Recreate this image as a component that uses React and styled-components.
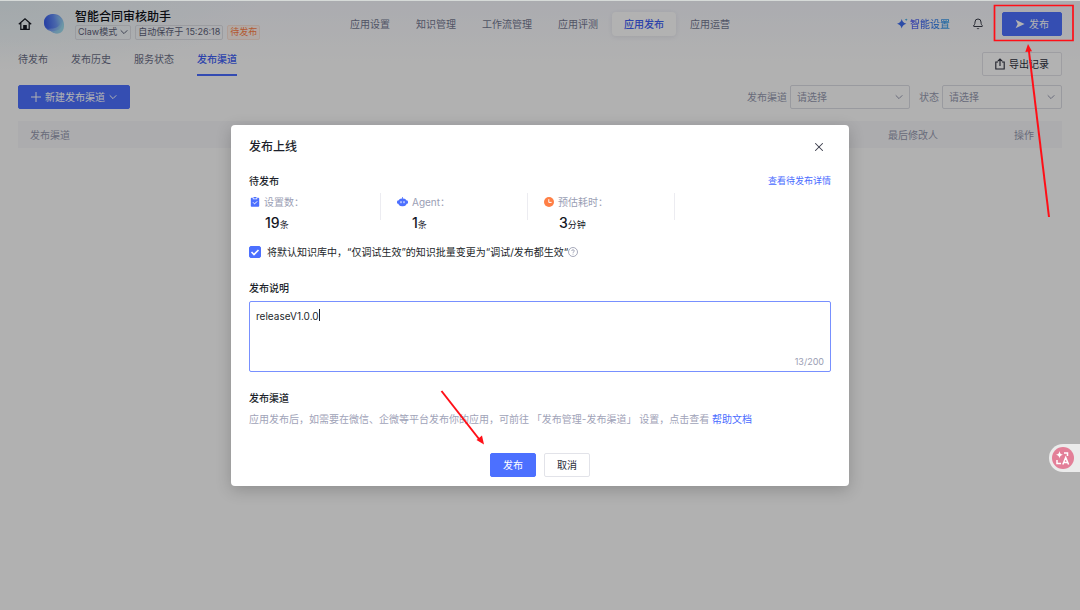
import React, { useState } from 'react';
import styled, { createGlobalStyle, css } from 'styled-components';
import { Bell, X } from 'lucide-react';

const GlobalStyle = createGlobalStyle`
	* {
		box-sizing: border-box;
	}
	body {
		margin: 0;
		color: #1c1f2b;
		background: #fff;
		font-family: Inter, 'Noto Sans CJK SC', sans-serif;
		font-size: 10px;
		line-height: 14px;
	}
	button,
	input,
	select,
	textarea {
		font: inherit;
		color: inherit;
	}
	a {
		color: #4a6cff;
		text-decoration: none;
	}
	svg {
		display: block;
		flex: none;
	}
`;

const Page = styled.div`
	position: relative;
	min-height: 100vh;
	overflow: hidden;
	border-top: 1px solid #d6dad8;
	background: radial-gradient(ellipse 260px 70px at 0 0, #e9f3f6, transparent),
		linear-gradient(180deg, #f5f6fd 0, #fefefe 60px);
`;

const Header = styled.header`
	display: grid;
	grid-template-columns: 1fr auto 1fr;
	align-items: center;
	height: 45px;
	padding: 0 18px;
`;

const Brand = styled.div`
	display: flex;
	align-items: center;
`;

const HomeLink = styled.a`
	color: #161922;
	margin-right: 11px;
`;

const BrandInfo = styled.div`
	margin-left: 10px;
`;

const AppName = styled.h1`
	margin: 0;
	font-size: 12px;
	line-height: 17px;
	font-weight: 500;
	color: #11131a;
`;

const Tags = styled.div`
	display: flex;
	gap: 4px;
`;

const tag = css`
	display: flex;
	align-items: center;
	height: 15px;
	padding: 0 2px;
	border: 1px solid #dfe0e6;
	border-radius: 2px;
	background: none;
	color: #5c6078;
	font-size: 9px;
	white-space: nowrap;
`;

const Tag = styled.span`
	${tag}
	${(p) =>
		p.$pending &&
		css`
			color: #ff7f47;
			border-color: #fbe3d7;
			background: #fff3ec;
		`}
`;

const ModeButton = styled.button`
	${tag}
	gap: 3px;
`;

const Nav = styled.nav`
	display: flex;
	gap: 2px;
`;

const NavLink = styled.a`
	padding: 5px 12px;
	border-radius: 4px;
	color: #747891;
	${(p) =>
		p.$active &&
		css`
			color: #4060f5;
			font-weight: 500;
			background: #fff;
			box-shadow: 0 1px 5px rgba(60, 60, 90, 0.1);
		`}
`;

const Actions = styled.div`
	display: flex;
	align-items: center;
	justify-content: flex-end;
`;

const SmartLink = styled.a`
	display: flex;
	align-items: center;
	gap: 2px;
	font-weight: 500;

	span {
		color: transparent;
		background: linear-gradient(90deg, #5a5cf5, #2e9fe8);
		background-clip: text;
	}
`;

const IconButton = styled.button`
	display: flex;
	padding: 0;
	border: 0;
	background: none;
	color: #3a3d4a;
	cursor: pointer;
`;

const BellButton = styled(IconButton)`
	margin: 0 18px 0 22px;
`;

const Button = styled.button`
	display: flex;
	align-items: center;
	justify-content: center;
	gap: 4px;
	height: 24px;
	padding: 0 12px;
	border: 1px solid #e2e3e9;
	border-radius: 2px;
	background: #fff;
	color: #2b2e3b;
	white-space: nowrap;
	cursor: pointer;
	${(p) =>
		p.$primary &&
		css`
			border-color: #4c70ff;
			background: #4c70ff;
			color: #fff;
		`}
`;

const PublishButton = styled(Button)`
	width: 60px;
`;

const Main = styled.main`
	padding: 0 18px;
`;

const TabRow = styled.div`
	display: flex;
	align-items: flex-end;
	justify-content: space-between;
	height: 30px;
`;

const Tabs = styled.div`
	display: flex;
	gap: 23px;
`;

const Tab = styled.a`
	padding-bottom: 8px;
	border-bottom: 2px solid ${(p) => (p.$active ? '#4a6cff' : 'transparent')};
	color: ${(p) => (p.$active ? '#4060f5' : '#6b6f87')};
	font-weight: ${(p) => (p.$active ? 500 : 400)};
`;

const Toolbar = styled.div`
	display: flex;
	justify-content: space-between;
	margin: 9px 0 12px;
`;

const Filters = styled.div`
	display: flex;
	gap: 9px;
`;

const Filter = styled.label`
	display: flex;
	align-items: center;
	gap: 3px;
	color: #969ab0;
`;

const SelectBox = styled.span`
	position: relative;
	width: 120px;

	svg {
		position: absolute;
		top: 8px;
		right: 7px;
		pointer-events: none;
	}
`;

const Select = styled.select`
	appearance: none;
	display: block;
	width: 100%;
	height: 24px;
	padding: 0 6px;
	border: 1px solid #dcdde4;
	border-radius: 2px;
	background: transparent;
`;

const Table = styled.table`
	width: 100%;
	border-collapse: collapse;
	table-layout: fixed;
`;

const Th = styled.th`
	width: ${(p) => p.$width || 'auto'};
	height: 27px;
	padding: 0 12px;
	background: #f6f7fa;
	color: #969ab0;
	font-weight: 400;
	text-align: left;
`;

const Mask = styled.div`
	position: absolute;
	inset: 0;
	display: flex;
	align-items: center;
	justify-content: center;
	background: rgba(0, 0, 0, 0.3);
`;

const Dialog = styled.section`
	position: relative;
	width: 618px;
	max-width: 100%;
	padding: 13px 18px 9px;
	border-radius: 4px;
	background: #fff;
	box-shadow: 0 4px 16px rgba(0, 0, 0, 0.2);
`;

const Row = styled.div`
	display: flex;
	align-items: center;
	justify-content: space-between;
`;

const DialogTitle = styled.h2`
	margin: 0;
	font-size: 12px;
	line-height: 18px;
	font-weight: 500;
`;

const CloseButton = styled(IconButton)`
	margin-right: 5px;
`;

const SectionTitle = styled.h3`
	margin: 0;
	font-size: 10px;
	line-height: 14px;
	font-weight: 500;
`;

const PendingRow = styled(Row)`
	margin-top: 18px;
	font-size: 9px;
`;

const Stats = styled.div`
	display: grid;
	grid-template-columns: repeat(3, 132px);
	gap: 15px;
	margin-top: 5px;
	height: 45px;
`;

const Stat = styled.div`
	height: 27px;
	border-right: 1px solid #ececf1;
`;

const StatLabel = styled.div`
	display: flex;
	align-items: center;
	gap: 4px;
	height: 18px;
	padding-left: 1px;
	color: #9a9eb4;
`;

const StatValue = styled.div`
	padding-left: 16px;
	font-size: 9px;
	line-height: 24px;
	color: #14161f;

	strong {
		font-size: 14px;
		font-weight: 500;
	}
`;

const CheckRow = styled.div`
	display: flex;
	align-items: center;
	margin-top: 7px;
	height: 14px;
`;

const Checkbox = styled.input`
	appearance: none;
	width: 12px;
	height: 12px;
	margin: 0 6px 0 0;
	border: 1px solid #4c70ff;
	border-radius: 2px;

	&:checked {
		background: #4c70ff
			url("data:image/svg+xml,%3Csvg xmlns='http://www.w3.org/2000/svg' viewBox='0 0 10 10'%3E%3Cpath d='M1.500 5l2.500 2.500L8.500 3' fill='none' stroke='white' stroke-width='1.600'/%3E%3C/svg%3E");
	}
`;

const Field = styled.div`
	position: relative;
	margin: 22px 0 19px;
`;

const FieldLabel = styled.label`
	display: block;
	margin-bottom: 6px;
	font-weight: 500;
`;

const TextArea = styled.textarea`
	display: block;
	width: 100%;
	height: 71px;
	padding: 7px 6px;
	border: 1px solid #7890ff;
	border-radius: 2px;
	outline: 0;
	resize: none;
	caret-color: transparent;
`;

const Caret = styled.i`
	position: absolute;
	top: 28px;
	left: 70px;
	width: 1px;
	height: 12px;
	background: #1c1f2b;
`;

const Counter = styled.span`
	position: absolute;
	right: 7px;
	bottom: 3px;
	font-size: 9px;
	color: #9a9eb4;
`;

const Hint = styled.p`
	margin: 7px 0 27px;
	color: #9fa3b8;
`;

const Footer = styled.div`
	display: flex;
	justify-content: center;
	gap: 8px;
`;

const FooterButton = styled(Button)`
	width: 46px;
	padding: 0;
`;

const CreateButton = styled(Button)`
	gap: 4px;
`;

const TranslateButton = styled.button`
	position: absolute;
	right: 0;
	top: 443px;
	display: flex;
	padding: 3px 6px 3px 3px;
	border: 0;
	border-radius: 14px 0 0 14px;
	background: #ebebeb;
`;

const HeaderMarks = styled.svg`
	position: absolute;
	top: -1px;
	right: 0;
	pointer-events: none;
`;

const DialogMark = styled.svg`
	position: absolute;
	top: 262px;
	left: 206px;
	pointer-events: none;
`;

const navItems = ['应用设置', '知识管理', '工作流管理', '应用评测', '应用发布', '应用运营'];
const tabItems = ['待发布', '发布历史', '服务状态', '发布渠道'];

const ChevronIcon = ({ size = 8 }) => (
	<svg width={size} height={size} viewBox="0 0 8 8" fill="none" stroke="currentColor">
		<path d="M.7 2.300 4 5.600 7.300 2.300" />
	</svg>
);

const PlusIcon = () => (
	<svg width="10" height="10" viewBox="0 0 10 10" stroke="currentColor">
		<path d="M5 0v10M0 5h10" />
	</svg>
);

const ExportIcon = () => (
	<svg width="10" height="12" viewBox="0 0 10 12" fill="none" stroke="currentColor" strokeWidth="1.100">
		<path d="M3 4H.8v7h8.400V4H7M5 8V1M2.800 3.200 5 1l2.200 2.200" />
	</svg>
);

const HomeIcon = () => (
	<svg width="14" height="14" viewBox="0 0 14 14" fill="none" stroke="currentColor" strokeWidth="1.2">
		<path d="M.8 7.2 7 1.7l6.2 5.5M2.8 5.6v6.7h8.4V5.6" />
		<path d="M5.8 12V8.500h2.400V12z" fill="currentColor" />
	</svg>
);

const Logo = () => (
	<svg width="22" height="22" viewBox="0 0 22 22">
		<defs>
			<linearGradient id="orb" x1="0" y1="0.3" x2="1" y2="0.7">
				<stop offset="0" stopColor="#3f66f0" />
				<stop offset="0.55" stopColor="#7fa6f6" />
				<stop offset="1" stopColor="#9fe0ea" />
			</linearGradient>
			<linearGradient id="swirl" x1="0.1" y1="0.6" x2="1" y2="0.3">
				<stop offset="0" stopColor="#3558e8" />
				<stop offset="0.6" stopColor="#5f8af5" />
				<stop offset="1" stopColor="#8fd0ee" />
			</linearGradient>
		</defs>
		<path d="M9.5 1C16 .5 21 5.500 21 12c0 5-3 8.500-7 8.500-3 0-4.500-1-6.500-2.500C3.500 17 1 14 1 9.500 1 4.500 4.500 1.300 9.500 1z" fill="url(#orb)" />
		<path d="M4 3.800C8 .5 15 1.500 17.500 6c1.500 4-1.500 8-5.500 9-3 .7-5 .5-7 1C2.500 15 1 13 1 9.500 1 7 2.200 5.200 4 3.800z" fill="url(#swirl)" opacity=".7" />
		<path d="M7.500 17.500c2.500 1.500 7 .5 9-1.500 2-2 3-4.500 2.500-7 3 4 2.500 11.500-5 11.500-3 0-5-1.500-6.500-3z" fill="#9fdcf0" opacity=".6" />
	</svg>
);

const SparkIcon = () => (
	<svg width="11" height="11" viewBox="0 0 11 11">
		<path d="M4.700 1C5.400 3.800 6.400 4.800 9.400 5.700 6.400 6.600 5.400 7.600 4.700 10.400 4 7.600 3 6.600 0 5.700 3 4.800 4 3.800 4.700 1z" fill="#3f6df0" />
		<path d="M9.200.3c.2 1 .5 1.300 1.500 1.500-1 .2-1.300.5-1.500 1.500-.2-1-.5-1.300-1.500-1.500 1-.2 1.300-.5 1.500-1.500z" fill="#35a8e6" />
	</svg>
);

const SendIcon = () => (
	<svg width="10" height="10" viewBox="0 0 10 10">
		<path d="M.6.8 9.600 5 .6 9.200 2.700 5z" fill="currentColor" />
	</svg>
);

const SettingsIcon = () => (
	<svg width="10" height="10" viewBox="0 0 10 10">
		<path d="M1.500.8h1.300v1.400h4.400V.8h1.300c.4 0 .7.300.7.700v7.600c0 .4-.3.700-.7.700h-7c-.4 0-.7-.3-.7-.7V1.500c0-.4.300-.7.700-.7z" fill="#4c70ff" />
		<path d="M3.500 0h3v1.500h-3z" fill="#4c70ff" />
		<path d="M3 5.300 4.600 6.900 7.200 4.300" fill="none" stroke="#fff" />
	</svg>
);

const AgentIcon = () => (
	<svg width="11" height="10" viewBox="0 0 11 10" fill="#4c70ff">
		<path d="M5 .3h1v1.500H5z" />
		<rect x="1.200" y="1.400" width="8.600" height="7.800" rx="3.900" />
		<rect x="0" y="3.600" width="11" height="3.200" rx="1" />
		<path d="M4 4.200v2M7 4.200v2" stroke="#fff" />
	</svg>
);

const ClockIcon = () => (
	<svg width="10" height="10" viewBox="0 0 10 10">
		<circle cx="5" cy="5" r="5" fill="#ff7f45" />
		<path d="M4.800 2.200v3.200h2.800" fill="none" stroke="#fff" />
	</svg>
);

const HelpIcon = () => (
	<svg width="10" height="10" viewBox="0 0 10 10" fill="none" stroke="#8f93a8" strokeWidth=".8">
		<circle cx="5" cy="5" r="4.500" />
		<path d="M3.700 4c0-1.700 2.600-1.700 2.600 0 0 .9-1.300.9-1.300 1.900M5 6.700v.9" />
	</svg>
);

const TranslateIcon = () => (
	<svg width="22" height="22" viewBox="0 0 22 22" fill="none" stroke="#fff" strokeWidth="1.500">
		<circle cx="11" cy="11" r="11" fill="#e37f98" stroke="none" />
		<path d="M7.500 4c.4 2.500 1.200 3.300 3.500 3.800-2.300.5-3.100 1.300-3.500 3.800C7.100 9.100 6.300 8.300 4 7.800c2.300-.5 3.100-1.300 3.500-3.800z" fill="#fff" stroke="none" />
		<path d="M12 6h3.500v3M5 13v3.500h4M10.800 17.500l2.900-7 2.900 7M11.800 15.400h3.800" />
	</svg>
);

const stats = [
	{ icon: <SettingsIcon />, label: '设置数：', value: 19, unit: '条' },
	{ icon: <AgentIcon />, label: 'Agent：', value: 1, unit: '条' },
	{ icon: <ClockIcon />, label: '预估耗时：', value: 3, unit: '分钟' },
];

const FilterSelect = ({ label }) => (
	<Filter>
		{label}
		<SelectBox>
			<Select defaultValue="">
				<option value="">请选择</option>
			</Select>
			<ChevronIcon />
		</SelectBox>
	</Filter>
);

const PublishDialog = () => {
	const [note, setNote] = useState('releaseV1.0.0');

	return (
		<Dialog role="dialog" aria-labelledby="dialog-title">
			<Row>
				<DialogTitle id="dialog-title">发布上线</DialogTitle>
				<CloseButton aria-label="关闭">
					<X size={14} strokeWidth={1.8} />
				</CloseButton>
			</Row>

			<PendingRow>
				<SectionTitle>待发布</SectionTitle>
				<a href="#detail">查看待发布详情</a>
			</PendingRow>
			<Stats>
				{stats.map((s) => (
					<Stat key={s.label}>
						<StatLabel>
							{s.icon}
							{s.label}
						</StatLabel>
						<StatValue>
							<strong>{s.value}</strong>
							{s.unit}
						</StatValue>
					</Stat>
				))}
			</Stats>

			<CheckRow>
				<Checkbox type="checkbox" id="batch" defaultChecked />
				<label htmlFor="batch">将默认知识库中，“仅调试生效”的知识批量变更为“调试/发布都生效“</label>
				<HelpIcon />
			</CheckRow>

			<Field>
				<FieldLabel htmlFor="note">发布说明</FieldLabel>
				<TextArea
					id="note"
					maxLength={200}
					value={note}
					onChange={(e) => setNote(e.target.value)}
				/>
				<Caret />
				<Counter>{note.length}/200</Counter>
			</Field>

			<SectionTitle>发布渠道</SectionTitle>
			<Hint>
				应用发布后，如需要在微信、企微等平台发布你的应用，可前往 「发布管理-发布渠道」 设置，点击查看{' '}
				<a href="#help">帮助文档</a>
			</Hint>

			<Footer>
				<FooterButton $primary>发布</FooterButton>
				<FooterButton>取消</FooterButton>
			</Footer>

			<DialogMark width="60" height="66" viewBox="0 0 60 66">
				<path d="M4.500 4 42 52" stroke="#ff0f17" strokeWidth="2" />
				<path d="M47 57.500 39.500 53 45 48.500z" fill="#ff0f17" />
			</DialogMark>
		</Dialog>
	);
};

export default function App() {
	return (
		<Page>
			<GlobalStyle />
			<Header>
				<Brand>
					<HomeLink href="#home" aria-label="首页">
						<HomeIcon />
					</HomeLink>
					<Logo />
					<BrandInfo>
						<AppName>智能合同审核助手</AppName>
						<Tags>
							<ModeButton>
								Claw模式
								<ChevronIcon />
							</ModeButton>
							<Tag>自动保存于 15:26:18</Tag>
							<Tag $pending>待发布</Tag>
						</Tags>
					</BrandInfo>
				</Brand>
				<Nav>
					{navItems.map((item) => (
						<NavLink key={item} href="#nav" $active={item === '应用发布'}>
							{item}
						</NavLink>
					))}
				</Nav>
				<Actions>
					<SmartLink href="#smart">
						<SparkIcon />
						<span>智能设置</span>
					</SmartLink>
					<BellButton aria-label="通知">
						<Bell size={12} strokeWidth={2} />
					</BellButton>
					<PublishButton $primary>
						<SendIcon />
						发布
					</PublishButton>
				</Actions>
			</Header>

			<Main>
				<TabRow>
					<Tabs>
						{tabItems.map((item) => (
							<Tab key={item} href="#tab" $active={item === '发布渠道'}>
								{item}
							</Tab>
						))}
					</Tabs>
					<Button>
						<ExportIcon />
						导出记录
					</Button>
				</TabRow>

				<Toolbar>
					<CreateButton $primary>
						<PlusIcon />
						新建发布渠道
						<ChevronIcon />
					</CreateButton>
					<Filters>
						<FilterSelect label="发布渠道" />
						<FilterSelect label="状态" />
					</Filters>
				</Toolbar>

				<Table>
					<thead>
						<tr>
							<Th>发布渠道</Th>
							<Th $width="126px">最后修改人</Th>
							<Th $width="60px">操作</Th>
						</tr>
					</thead>
				</Table>
			</Main>

			<Mask>
				<PublishDialog />
			</Mask>

			<TranslateButton aria-label="翻译">
				<TranslateIcon />
			</TranslateButton>

			<HeaderMarks width="100" height="225" viewBox="0 0 100 225" fill="none" stroke="#ff0f17">
				<path d="M14.500 5.500h78.500v35h-78.500z" strokeWidth="1.700" />
				<path d="M69 217 48.800 50" strokeWidth="2" />
				<path d="M48 44 52 51.300 45.300 52z" fill="#ff0f17" stroke="none" />
			</HeaderMarks>
		</Page>
	);
}
